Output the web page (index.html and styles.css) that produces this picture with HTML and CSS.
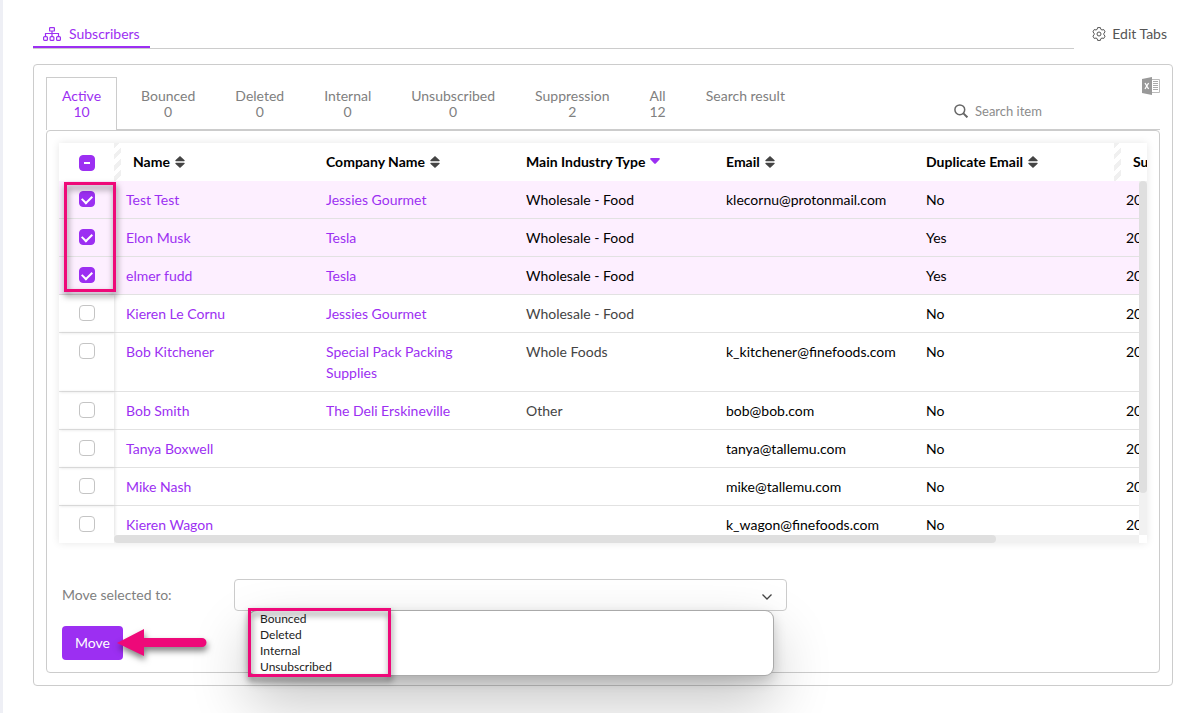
FILE: index.html
```html
<!DOCTYPE html>
<html lang="en">
<head>
    <meta charset="UTF-8">
    <meta name="viewport" content="width=device-width, initial-scale=1.0">
    <title>Subscribers</title>
    <link rel="stylesheet" href="styles.css">
</head>
<body>
    <svg class="sprite" aria-hidden="true">
        <symbol id="sort" viewBox="0 0 10 12">
            <path d="M5 0 L9.6 4.2 Q10 5.3 9 5.3 H1 Q0 5.3 0.4 4.2 Z M5 12 L9.6 7.8 Q10 6.7 9 6.7 H1 Q0 6.7 0.4 7.8 Z"/>
        </symbol>
    </svg>

    <main class="page">
        <!-- Page tabs -->
        <header class="topbar">
            <nav class="topbar-nav">
                <a href="#" class="page-tab">
                    <svg width="18" height="14" viewBox="0 0 18 14" fill="none" stroke="currentColor" stroke-width="1.2">
                        <rect x="6.6" y="0.6" width="4.8" height="3.4" rx="0.6"/>
                        <path d="M9 4 V9.5 M2.5 9.5 V6.5 H15.5 V9.5"/>
                        <rect x="0.6" y="9.6" width="3.8" height="3.8" rx="1"/>
                        <rect x="7.1" y="9.6" width="3.8" height="3.8" rx="1"/>
                        <rect x="13.6" y="9.6" width="3.8" height="3.8" rx="1"/>
                    </svg>
                    Subscribers
                </a>
            </nav>
            <a href="#" class="edit-tabs">
                <svg width="14" height="14" viewBox="0 0 14 14" fill="none" stroke="currentColor" stroke-linejoin="round">
                    <path d="M5.6 0.6 H8.4 L8.8 2.3 L10 3 L11.7 2.5 L13.1 4.9 L11.9 6.2 V7.8 L13.1 9.1 L11.7 11.5 L10 11 L8.8 11.7 L8.4 13.4 H5.6 L5.2 11.7 L4 11 L2.3 11.5 L0.9 9.1 L2.1 7.8 V6.2 L0.9 4.9 L2.3 2.5 L4 3 L5.2 2.3 Z"/>
                    <circle cx="7" cy="7" r="2"/>
                </svg>
                Edit Tabs
            </a>
        </header>

        <section class="card">
            <!-- Status tabs and search -->
            <div class="toolbar">
                <nav class="tabs">
                    <a href="#" class="tab active">Active<br>10</a>
                    <a href="#" class="tab">Bounced<br>0</a>
                    <a href="#" class="tab">Deleted<br>0</a>
                    <a href="#" class="tab">Internal<br>0</a>
                    <a href="#" class="tab">Unsubscribed<br>0</a>
                    <a href="#" class="tab">Suppression<br>2</a>
                    <a href="#" class="tab">All<br>12</a>
                    <a href="#" class="tab">Search result</a>
                </nav>
                <div class="search">
                    <svg width="14" height="14" viewBox="0 0 14 14" fill="none" stroke="currentColor" stroke-width="1.5">
                        <circle cx="5.8" cy="5.8" r="4.9"/>
                        <path d="M9.4 9.4 L13.4 13.4" stroke-width="2"/>
                    </svg>
                    <input type="text" placeholder="Search item" aria-label="Search item">
                </div>
                <button type="button" class="export" aria-label="Export to Excel">
                    <svg width="18" height="18" viewBox="0 0 18 18">
                        <path d="M10 2.5 H17.5 V15.5 H10" fill="#fff" stroke="#bbb"/>
                        <path d="M11 4.5 H16 M11 6.5 H16 M11 8.5 H16 M11 10.5 H16 M11 12.5 H16" stroke="#aaa"/>
                        <path d="M0 2 L10 0 V18 L0 16 Z" fill="#999"/>
                        <path d="M3 6 L6.6 12 M6.6 6 L3 12" stroke="#fff" stroke-width="1.3"/>
                    </svg>
                </button>
            </div>

            <div class="panel">
                <!-- Subscriber list -->
                <div class="grid">
                    <table>
                        <thead>
                            <tr>
                                <th class="check-col"><input type="checkbox" class="check partial" aria-label="Select all"></th>
                                <th class="resize">Name <svg class="sort"><use href="#sort"/></svg></th>
                                <th>Company Name <svg class="sort"><use href="#sort"/></svg></th>
                                <th>Main Industry Type <svg class="sort-down" viewBox="0 0 10 6"><path d="M1 0 H9 Q10.3 0.2 9.5 1.4 L5.8 5.5 Q5 6.2 4.2 5.5 L0.5 1.4 Q-0.3 0.2 1 0 Z"/></svg></th>
                                <th>Email <svg class="sort"><use href="#sort"/></svg></th>
                                <th>Duplicate Email <svg class="sort"><use href="#sort"/></svg></th>
                                <th class="resize">Su</th>
                            </tr>
                        </thead>
                        <tbody>
                            <tr class="selected">
                                <td class="check-col"><input type="checkbox" class="check" aria-label="Select Test Test" checked></td>
                                <td><a href="#">Test Test</a></td>
                                <td><a href="#">Jessies Gourmet</a></td>
                                <td class="industry">Wholesale - Food</td>
                                <td>klecornu@protonmail.com</td>
                                <td>No</td>
                                <td>20</td>
                            </tr>
                            <tr class="selected">
                                <td class="check-col"><input type="checkbox" class="check" aria-label="Select Elon Musk" checked></td>
                                <td><a href="#">Elon Musk</a></td>
                                <td><a href="#">Tesla</a></td>
                                <td class="industry">Wholesale - Food</td>
                                <td></td>
                                <td>Yes</td>
                                <td>20</td>
                            </tr>
                            <tr class="selected">
                                <td class="check-col"><input type="checkbox" class="check" aria-label="Select elmer fudd" checked></td>
                                <td><a href="#">elmer fudd</a></td>
                                <td><a href="#">Tesla</a></td>
                                <td class="industry">Wholesale - Food</td>
                                <td></td>
                                <td>Yes</td>
                                <td>20</td>
                            </tr>
                            <tr>
                                <td class="check-col"><input type="checkbox" class="check" aria-label="Select Kieren Le Cornu"></td>
                                <td><a href="#">Kieren Le Cornu</a></td>
                                <td><a href="#">Jessies Gourmet</a></td>
                                <td class="industry">Wholesale - Food</td>
                                <td></td>
                                <td>No</td>
                                <td>20</td>
                            </tr>
                            <tr>
                                <td class="check-col"><input type="checkbox" class="check" aria-label="Select Bob Kitchener"></td>
                                <td><a href="#">Bob Kitchener</a></td>
                                <td><a href="#">Special Pack Packing Supplies</a></td>
                                <td class="industry">Whole Foods</td>
                                <td>k_kitchener@finefoods.com</td>
                                <td>No</td>
                                <td>20</td>
                            </tr>
                            <tr>
                                <td class="check-col"><input type="checkbox" class="check" aria-label="Select Bob Smith"></td>
                                <td><a href="#">Bob Smith</a></td>
                                <td><a href="#">The Deli Erskineville</a></td>
                                <td class="industry">Other</td>
                                <td>bob@bob.com</td>
                                <td>No</td>
                                <td>20</td>
                            </tr>
                            <tr>
                                <td class="check-col"><input type="checkbox" class="check" aria-label="Select Tanya Boxwell"></td>
                                <td><a href="#">Tanya Boxwell</a></td>
                                <td></td>
                                <td class="industry"></td>
                                <td>tanya@tallemu.com</td>
                                <td>No</td>
                                <td>20</td>
                            </tr>
                            <tr>
                                <td class="check-col"><input type="checkbox" class="check" aria-label="Select Mike Nash"></td>
                                <td><a href="#">Mike Nash</a></td>
                                <td></td>
                                <td class="industry"></td>
                                <td>mike@tallemu.com</td>
                                <td>No</td>
                                <td>20</td>
                            </tr>
                            <tr>
                                <td class="check-col"><input type="checkbox" class="check" aria-label="Select Kieren Wagon"></td>
                                <td><a href="#">Kieren Wagon</a></td>
                                <td></td>
                                <td class="industry"></td>
                                <td>k_wagon@finefoods.com</td>
                                <td>No</td>
                                <td>20</td>
                            </tr>
                        </tbody>
                    </table>
                    <div class="scroll-y"></div>
                    <div class="scroll-x"></div>
                    <div class="highlight highlight-rows"></div>
                </div>

                <!-- Move form -->
                <form class="move-form">
                    <div class="move-row">
                        <label for="moveTo">Move selected to:</label>
                        <div class="select-wrap">
                            <select id="moveTo" name="moveTo">
                                <option value=""></option>
                                <option value="bounced">Bounced</option>
                                <option value="deleted">Deleted</option>
                                <option value="internal">Internal</option>
                                <option value="unsubscribed">Unsubscribed</option>
                            </select>
                            <svg class="chevron" width="10" height="6" viewBox="0 0 10 6" fill="none" stroke="#444" stroke-width="1.3"><path d="M0.5 0.5 L5 5 L9.5 0.5"/></svg>
                            <ul class="options">
                                <li>Bounced</li>
                                <li>Deleted</li>
                                <li>Internal</li>
                                <li>Unsubscribed</li>
                            </ul>
                            <div class="highlight highlight-options"></div>
                        </div>
                    </div>
                    <div class="move-action">
                        <button type="button" class="btn">Move</button>
                        <svg class="arrow" width="90" height="28" viewBox="0 0 90 28">
                            <path d="M0 14 L27 0 V9 H85 A4.5 4.5 0 0 1 85 18 H27 V27 Z" fill="#ee0979"/>
                        </svg>
                    </div>
                </form>
            </div>
        </section>
    </main>
</body>
</html>
```
FILE: styles.css
```css
/* General Styles */
* {
    box-sizing: border-box;
}
body {
    margin: 0;
    font-family: Lato, sans-serif;
    font-size: 14px;
    line-height: 21px;
    color: #000;
    background-color: #fff;
}
a {
    color: #9c2ff2;
    text-decoration: none;
}
input,
select,
button {
    font: inherit;
}
.sprite {
    display: none;
}
.page {
    min-height: 100vh;
    padding: 23px 4px 24px 30px;
    border-left: 3px solid #eeeff5;
}

/* Top bar */
.topbar {
    display: flex;
    gap: 18px;
    padding-right: 6px;
    margin-bottom: 15px;
}
.topbar-nav {
    flex: 1;
    display: flex;
    border-bottom: 1px solid #ccc;
}
.page-tab {
    display: flex;
    align-items: center;
    gap: 8px;
    padding: 0 10px 2px;
    border-bottom: 2px solid #9c2ff2;
}
.edit-tabs {
    display: flex;
    align-items: center;
    gap: 6px;
    padding-bottom: 5px;
    line-height: 20px;
    color: #555;
}

/* Card and status tabs */
.card {
    padding: 12px;
    border: 1px solid #ccc;
    border-radius: 4px;
}
.toolbar {
    display: flex;
    border-bottom: 1px solid #ccc;
}
.tabs {
    display: flex;
    gap: 8px;
    margin-bottom: -1px;
}
.tab {
    padding: 10px 15px;
    border: 1px solid transparent;
    border-bottom: 0;
    line-height: 16px;
    text-align: center;
    color: #808080;
    white-space: nowrap;
}
.tab.active {
    color: #9c2ff2;
    background-color: #fff;
    border-color: #ccc;
}
.search {
    display: flex;
    align-items: center;
    gap: 7px;
    margin-left: auto;
    padding-top: 16px;
    color: #666;
}
.search input {
    width: 153px;
    padding: 0;
    border: 0;
    outline: 0;
    font-size: 13px;
}
.search input::placeholder {
    color: #8c8c8c;
}
.export {
    align-self: flex-start;
    display: flex;
    margin-left: 14px;
    padding: 0;
    border: 0;
    background: none;
}

/* Subscriber list */
.panel {
    padding: 12px;
    border: 1px solid #ccc;
    border-radius: 4px;
}
.grid {
    position: relative;
    height: 400px;
    box-shadow: 0 0 8px rgba(0, 0, 0, 0.1);
}
.grid table {
    display: block;
    height: 100%;
    overflow: hidden;
    border-collapse: separate;
    border-spacing: 0;
}
th,
td {
    width: 200px;
    min-width: 200px;
    padding: 8px 12px;
    text-align: left;
    vertical-align: top;
    white-space: nowrap;
}
th {
    height: 38px;
    font-weight: 700;
}
td {
    border-bottom: 1px solid #e2e2e2;
    white-space: normal;
}
th.resize {
    padding-left: 19px;
    background: repeating-linear-gradient(135deg, #f0f0f0 0 4px, #fff 4px 8px) left / 7px 100% no-repeat;
}
.check-col {
    width: 55px;
    min-width: 55px;
    padding: 10px 0 0 20px;
    box-shadow: 1px 0 3px rgba(0, 0, 0, 0.12);
}
th.check-col {
    padding-top: 12px;
    box-shadow: none;
}
.selected td {
    background-color: #fdefff;
}
.selected .check-col {
    box-shadow: none;
}
.industry {
    color: #444;
}
.selected .industry {
    color: #000;
}
.sort {
    width: 10px;
    height: 12px;
    margin-left: 2px;
    vertical-align: -1px;
    fill: #444;
}
.sort-down {
    width: 10px;
    height: 6px;
    margin-left: 1px;
    vertical-align: 3px;
    fill: #9c2ff2;
}
.check {
    appearance: none;
    display: flex;
    align-items: center;
    justify-content: center;
    width: 16px;
    height: 16px;
    margin: 0;
    border: 1px solid #c4c4c4;
    border-radius: 4px;
    background-color: #fff;
}
.check:checked,
.check.partial {
    border-color: #9c2ff2;
    background-color: #9c2ff2;
}
.check:checked::after {
    content: "";
    width: 8px;
    height: 5px;
    margin-bottom: 2px;
    border-left: 2px solid #fff;
    border-bottom: 2px solid #fff;
    transform: rotate(-45deg);
}
.check.partial::after {
    content: "";
    width: 6px;
    height: 2px;
    background-color: #fff;
}

/* Scrollbars */
.scroll-y,
.scroll-x {
    position: absolute;
    background-color: #f1f1f1;
}
.scroll-y {
    top: 38px;
    right: 0;
    bottom: 8px;
    width: 8px;
}
.scroll-x {
    left: 55px;
    right: 8px;
    bottom: 0;
    height: 8px;
}
.scroll-y::before,
.scroll-x::before {
    content: "";
    display: block;
    border-radius: 4px;
    background-color: #dfdfdf;
}
.scroll-y::before {
    height: 88%;
}
.scroll-x::before {
    width: 86%;
    height: 100%;
}

/* Move form */
.move-form {
    margin-top: 36px;
    padding-left: 3px;
}
.move-row {
    display: flex;
    align-items: center;
    margin-bottom: 15px;
}
.move-row label {
    width: 172px;
    padding-bottom: 1px;
    color: #808080;
}
.select-wrap {
    position: relative;
    width: 51%;
}
.select-wrap select {
    appearance: none;
    display: block;
    width: 100%;
    height: 32px;
    border: 1px solid #ccc;
    border-radius: 4px;
    background-color: #fff;
}
.chevron {
    position: absolute;
    right: 15px;
    top: 15px;
}
.options {
    position: absolute;
    top: 100%;
    left: 15px;
    right: 14px;
    margin: 0;
    padding: 0 11px;
    list-style: none;
    font-size: 12px;
    line-height: 16px;
    color: #222;
    background-color: #fff;
    border-radius: 8px;
    box-shadow: 0 0 0 1px #aaa, 0 5px 14px rgba(0, 0, 0, 0.2), 0 26px 58px rgba(0, 0, 0, 0.24);
}
.move-action {
    position: relative;
}
.btn {
    display: block;
    height: 34px;
    padding: 0 13px 1px;
    border: 0;
    border-radius: 4px;
    color: #fff;
    background-color: #9c2ff2;
    cursor: pointer;
}

/* Callouts */
.highlight {
    position: absolute;
    border: 3px solid #ee0979;
    filter: drop-shadow(1px 4px 3px rgba(0, 0, 0, 0.5));
}
.highlight-rows {
    top: 39px;
    left: 5px;
    width: 52px;
    height: 110px;
}
.highlight-options {
    top: 29px;
    left: 14px;
    width: 143px;
    height: 69px;
}
.arrow {
    position: absolute;
    top: 3px;
    left: 55px;
    overflow: visible;
    filter: drop-shadow(1px 4px 3px rgba(0, 0, 0, 0.5));
}
```
